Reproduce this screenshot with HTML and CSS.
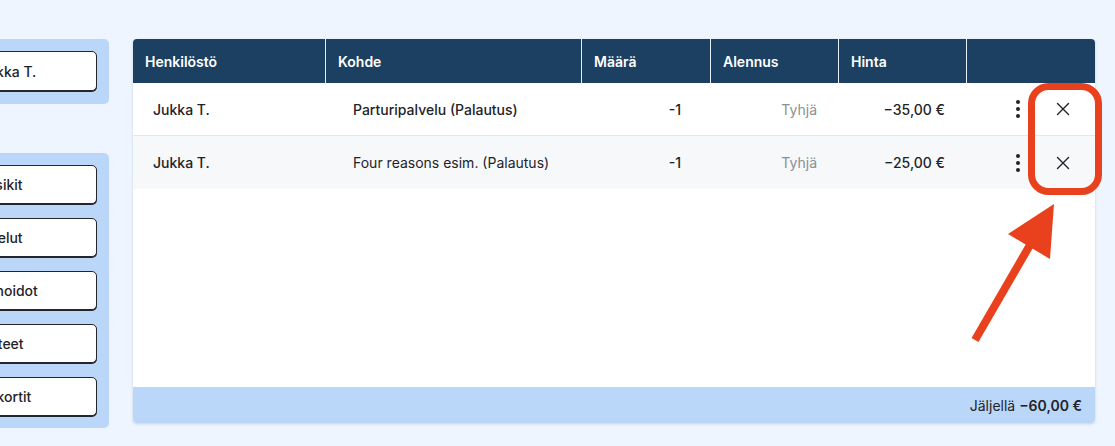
FILE: index.html
```html
<!DOCTYPE html>
<html lang="fi">
<head>
<meta charset="utf-8">
<title>Kassa</title>
<link rel="stylesheet" href="styles.css">
</head>
<body>
<div class="page">
  <aside class="sidebar">
    <div class="panel">
      <button class="side-btn side-btn-staff">Jukka T.</button>
    </div>
    <div class="panel panel-list">
      <button class="side-btn">Suosikit</button>
      <button class="side-btn">Palvelut</button>
      <button class="side-btn">Kasvohoidot</button>
      <button class="side-btn">Tuotteet</button>
      <button class="side-btn">Lahjakortit</button>
    </div>
  </aside>
  <main class="card">
    <div class="grid head">
      <div class="hcell">Henkilöstö</div>
      <div class="hcell">Kohde</div>
      <div class="hcell">Määrä</div>
      <div class="hcell">Alennus</div>
      <div class="hcell">Hinta</div>
      <div class="hcell"></div>
    </div>
    <div class="grid row">
      <div class="cell c-staff">Jukka T.</div>
      <div class="cell c-item strong">Parturipalvelu (Palautus)</div>
      <div class="cell c-qty">-1</div>
      <div class="cell c-disc">Tyhjä</div>
      <div class="cell c-price">−35,00 €</div>
      <div class="cell c-act">
        <span class="kebab"><i></i><i></i><i></i></span>
        <span class="close"><svg width="14" height="14" viewBox="0 0 14 14"><path d="M1.5 1.5L12.5 12.5M12.5 1.5L1.5 12.5" stroke="#1f2328" stroke-width="1.4" fill="none" stroke-linecap="round"/></svg></span>
      </div>
    </div>
    <div class="grid row alt">
      <div class="cell c-staff">Jukka T.</div>
      <div class="cell c-item">Four reasons esim. (Palautus)</div>
      <div class="cell c-qty">-1</div>
      <div class="cell c-disc">Tyhjä</div>
      <div class="cell c-price">−25,00 €</div>
      <div class="cell c-act">
        <span class="kebab"><i></i><i></i><i></i></span>
        <span class="close"><svg width="14" height="14" viewBox="0 0 14 14"><path d="M1.5 1.5L12.5 12.5M12.5 1.5L1.5 12.5" stroke="#1f2328" stroke-width="1.4" fill="none" stroke-linecap="round"/></svg></span>
      </div>
    </div>
    <div class="spacer"></div>
    <div class="footer">Jäljellä <b>−60,00 €</b></div>
  </main>
</div>
<svg class="annot" width="1115" height="446" viewBox="0 0 1115 446">
  <rect x="1031.5" y="86.5" width="67" height="105" rx="17" ry="17" fill="none" stroke="#e9401d" stroke-width="7"/>
  <line x1="975" y1="340" x2="1030" y2="245" stroke="#e9401d" stroke-width="8"/>
  <polygon points="1054,204 1008,234 1050,259" fill="#e9401d"/>
</svg>
</body>
</html>
```
FILE: styles.css
```css
* { box-sizing: border-box; }
html, body { margin: 0; padding: 0; }
body {
  background: #eef5fe;
  font-family: Inter, "Noto Sans", "Liberation Sans", sans-serif;
  color: #1f2328;
  width: 1115px;
  height: 446px;
  overflow: hidden;
  position: relative;
}
.page {
  display: flex;
  align-items: flex-start;
  gap: 24px;
  padding-top: 39px;
}
.sidebar {
  margin-left: -117px;
  width: 226px;
  display: flex;
  flex-direction: column;
  gap: 49px;
  flex: none;
}
.panel {
  background: #bad6f8;
  border-radius: 5px;
  padding: 12px 12px 13px;
  display: flex;
  flex-direction: column;
  gap: 14px;
}
.panel-list { padding-bottom: 12px; }
.side-btn {
  height: 39px;
  background: #fff;
  border: 1px solid #23262b;
  box-shadow: 0 1px 0 #23262b;
  border-radius: 5px;
  font-family: inherit;
  font-size: 14px;
  font-weight: 500;
  color: #1f2328;
  text-align: center;
  padding: 0;
}
.side-btn-staff { height: 40px; padding-left: 24px; }
.card {
  width: 962px;
  height: 384px;
  background: #fff;
  border-radius: 4px;
  overflow: hidden;
  box-shadow: 0 1px 3px rgba(30, 60, 100, 0.18);
  display: flex;
  flex-direction: column;
  flex: none;
}
.grid {
  display: grid;
  grid-template-columns: 192px 256px 129px 128px 128px 129px;
}
.head {
  background: #1c4062;
  height: 44px;
  color: #fff;
  font-size: 14px;
  font-weight: 600;
}
.hcell {
  display: flex;
  align-items: center;
  padding-left: 12px;
}
.hcell + .hcell { border-left: 1px solid #e8eef5; }
.row {
  height: 53px;
  font-size: 14px;
  border-bottom: 1px solid #e3e7ec;
}
.row.alt { background: #f6f8fa; border-bottom: none; }
.cell {
  display: flex;
  align-items: center;
  white-space: nowrap;
}
.c-staff { padding-left: 20px; font-weight: 500; }
.c-item { padding-left: 28px; }
.c-item.strong { font-weight: 500; }
.c-qty { justify-content: flex-end; padding-right: 29px; font-weight: 500; }
.c-disc { justify-content: flex-end; padding-right: 21px; color: #8a8f96; }
.c-price { justify-content: flex-end; padding-right: 21px; font-weight: 500; }
.c-act {
  justify-content: flex-start;
  padding-left: 45px;
}
.kebab {
  width: 14px;
  height: 18px;
  display: flex;
  flex-direction: column;
  align-items: center;
  justify-content: space-between;
}
.kebab i {
  display: block;
  width: 4px;
  height: 4px;
  border-radius: 50%;
  background: #1f2328;
}
.close {
  width: 32px;
  height: 32px;
  margin-left: 22px;
  display: flex;
  align-items: center;
  justify-content: center;
}
.spacer { flex: 1; }
.footer {
  height: 36px;
  background: #bad6f8;
  display: flex;
  align-items: center;
  justify-content: flex-end;
  gap: 4px;
  padding-right: 13px;
  font-size: 14px;
}
.footer b { font-weight: 600; }
.annot {
  position: absolute;
  left: 0;
  top: 0;
  pointer-events: none;
}
```
